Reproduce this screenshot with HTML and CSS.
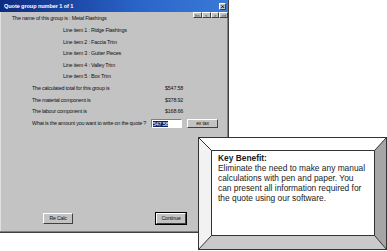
FILE: index.html
```html
<!DOCTYPE html>
<html lang="en">
<head>
    <meta charset="UTF-8">
    <title>Quote group number 1 of 1</title>
    <link rel="stylesheet" href="styles.css">
</head>
<body>

    <div class="window">
        <div class="title-bar">
            <span class="title-text">Quote group number 1 of 1</span>
            <span class="close-btn">&times;</span>
        </div>

        <div class="content">
            <div class="row row-first">
                <span>The name of this group is : Metal Flashings</span>
                <div class="nav-group">
                    <span class="nav-btn">|&lt;&lt;</span>
                    <span class="nav-btn">&lt;</span>
                    <span class="nav-btn">&gt;</span>
                    <span class="nav-btn">&gt;&gt;|</span>
                </div>
            </div>
            <div class="row item">Line item 1 : Ridge Flashings</div>
            <div class="row item">Line item 2 : Faccia Trim</div>
            <div class="row item">Line item 3 : Gutter Pieces</div>
            <div class="row item">Line item 4 : Valley Trim</div>
            <div class="row item">Line item 5 : Box Trim</div>

            <div class="row total">
                <span class="total-label">The calculated total for this group is</span>
                <span>$547.58</span>
            </div>
            <div class="row total">
                <span class="total-label">The material component is</span>
                <span>$378.92</span>
            </div>
            <div class="row total">
                <span class="total-label">The labour component is</span>
                <span>$168.66</span>
            </div>
            <div class="row total">
                <span class="amount-label">What is the amount you want to write on the quote ?</span>
                <span class="amount-input"><span class="selected">547.58</span></span>
                <span class="btn tax-btn">ex tax</span>
            </div>

            <div class="bottom-buttons">
                <span class="btn">Re Calc</span>
                <span class="btn default-btn">Continue</span>
            </div>
        </div>
    </div>

    <!-- callout sits over the dialog corner -->
    <div class="callout">
        <svg class="callout-frame" width="189" height="113" viewBox="0 0 189 113">
            <polygon points="0,0 189,0 177,13 13,13" fill="#ffffff"/>
            <polygon points="0,0 13,13 13,99 0,113" fill="#f2f2f2"/>
            <polygon points="189,0 189,113 177,99 177,13" fill="#a6a6a6"/>
            <polygon points="0,113 189,113 177,99 13,99" fill="#cacaca"/>
            <rect x="0.5" y="0.5" width="188" height="112" fill="none" stroke="#333" stroke-width="1"/>
            <rect x="13.5" y="13.5" width="163" height="85" fill="#fff" stroke="#333" stroke-width="1"/>
            <line x1="0" y1="0" x2="13" y2="13" stroke="#333"/>
            <line x1="189" y1="0" x2="177" y2="13" stroke="#333"/>
            <line x1="0" y1="113" x2="13" y2="99" stroke="#333"/>
            <line x1="189" y1="113" x2="177" y2="99" stroke="#333"/>
        </svg>
        <div class="callout-text">
            <strong>Key Benefit:</strong><br>
            Eliminate the need to make any manual calculations with pen and paper. You can present all information required for the quote using our software.
        </div>
    </div>

</body>
</html>
```

FILE: styles.css
```css
body {
    margin: 0;
    width: 387px;
    height: 251px;
    overflow: hidden;
    background-color: #fff;
    font-family: "Liberation Sans", Arial, sans-serif;
    position: relative;
}
.window {
    width: 228px;
    height: 232px;
    background-color: #c3c3c3;
    border-right: 1px solid #404040;
    border-bottom: 1px solid #404040;
    box-shadow: inset -1px -1px 0 #808080, inset 1px 1px 0 #e0e0e0;
    display: flex;
    flex-direction: column;
}
.title-bar {
    height: 12px;
    background: linear-gradient(to right, #0c2a80, #2a64c8 60%, #3a7ad8);
    display: flex;
    align-items: center;
    justify-content: space-between;
    padding: 0 1px 0 4px;
}
.title-text {
    color: #fff;
    font-weight: bold;
    font-size: 5.6px;
    letter-spacing: -0.1px;
}
.close-btn {
    width: 7px;
    height: 7px;
    background-color: #c3c3c3;
    border: 1px solid;
    border-color: #fff #404040 #404040 #fff;
    font-size: 8px;
    line-height: 6px;
    text-align: center;
    color: #000;
    box-sizing: border-box;
    margin-right: 1px;
}
.content {
    flex: 1;
    display: flex;
    flex-direction: column;
    font-size: 5.4px;
    letter-spacing: -0.2px;
    color: #111;
}
.row {
    height: 11.6px;
    line-height: 11.6px;
    padding-left: 12px;
    display: flex;
    align-items: center;
}
.row-first {
    height: 13px;
    line-height: 13px;
    justify-content: space-between;
    align-items: flex-start;
}
.nav-group {
    display: flex;
}
.nav-btn {
    width: 8.75px;
    height: 6px;
    line-height: 6px;
    font-size: 4px;
    letter-spacing: -0.4px;
    text-align: center;
    background-color: #c3c3c3;
    border: 1px solid;
    border-color: #fff #404040 #404040 #fff;
    box-sizing: border-box;
}
.item {
    padding-left: 63px;
}
.total {
    padding-left: 32px;
}
.total-label {
    width: 133px;
}
.amount-label {
    width: 119px;
}
.amount-input {
    width: 31px;
    height: 9px;
    background-color: #fff;
    border: 1px solid;
    border-color: #808080 #fff #fff #808080;
    box-sizing: border-box;
    display: flex;
    align-items: center;
    padding-left: 1px;
    margin-right: 5px;
}
.selected {
    background-color: #0a246a;
    color: #fff;
    line-height: 6px;
}
.btn {
    height: 9px;
    width: 31px;
    line-height: 7px;
    text-align: center;
    background-color: #c3c3c3;
    border: 1px solid;
    border-color: #fff #404040 #404040 #fff;
    box-sizing: border-box;
    font-size: 5.2px;
}
.bottom-buttons {
    margin-top: auto;
    margin-bottom: 8px;
    display: flex;
    gap: 83px;
    padding-left: 43px;
}
.bottom-buttons .btn {
    height: 11px;
    width: 30px;
    line-height: 9px;
}
.default-btn {
    outline: 1px solid #000;
}

/* callout box */
.callout {
    position: absolute;
    left: 198px;
    top: 137px;
    width: 189px;
    height: 113px;
}
.callout-frame {
    position: absolute;
    left: 0;
    top: 0;
}
.callout-text {
    position: relative;
    padding: 3px 0 0 20px;
    margin-top: 13px;
    width: 150px;
    font-size: 8.4px;
    line-height: 10px;
    color: #1a1a1a;
}
```
